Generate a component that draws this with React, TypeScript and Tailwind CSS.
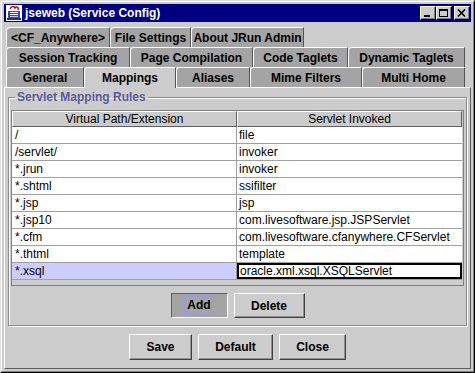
import React from 'react';

const rows: [string, string][] = [
  ['/', 'file'],
  ['/servlet/', 'invoker'],
  ['*.jrun', 'invoker'],
  ['*.shtml', 'ssifilter'],
  ['*.jsp', 'jsp'],
  ['*.jsp10', 'com.livesoftware.jsp.JSPServlet'],
  ['*.cfm', 'com.livesoftware.cfanywhere.CFServlet'],
  ['*.thtml', 'template'],
  ['*.xsql', 'oracle.xml.xsql.XSQLServlet'],
];

// tab rows, back to front
const tabRows: { label: string; w: string }[][] = [
  [
    { label: '<CF_Anywhere>', w: 'w-[104px]' },
    { label: 'File Settings', w: 'w-[81px]' },
    { label: 'About JRun Admin', w: 'w-[113px]' },
  ],
  [
    { label: 'Session Tracking', w: 'w-[124px]' },
    { label: 'Page Compilation', w: 'w-[123px]' },
    { label: 'Code Taglets', w: 'w-[95px]' },
    { label: 'Dynamic Taglets', w: 'w-[117px]' },
  ],
  [
    { label: 'General', w: 'w-[78px]' },
    { label: 'Mappings', w: 'w-[92px]' },
    { label: 'Aliases', w: 'w-[74px]' },
    { label: 'Mime Filters', w: 'w-[112px]' },
    { label: 'Multi Home', w: 'w-[103px]' },
  ],
];

function AppIcon() {
  return (
    <svg width="16" height="16" viewBox="0 0 16 16" className="shrink-0">
      <rect x="0" y="0" width="16" height="16" fill="#ffffff" />
      <path d="M4 4 C5 1 8 1 9 3 C10 1 13 2 12 5" stroke="#d00000" strokeWidth="1.5" fill="none" />
      <rect x="2" y="6" width="12" height="7" fill="#3050a0" />
      <rect x="4" y="7" width="8" height="1" fill="#ffffff" />
      <rect x="4" y="9" width="8" height="1" fill="#ffffff" />
      <rect x="4" y="11" width="8" height="1" fill="#c0c0ff" />
      <rect x="1" y="13" width="14" height="2" fill="#203070" />
    </svg>
  );
}

function CaptionButton({ kind }: { kind: 'min' | 'max' | 'close' }) {
  return (
    <div className="w-[16px] h-[14px] bg-[#cccccc] border border-t-white border-l-white border-b-black border-r-black shadow-[inset_-1px_-1px_0_#808080] flex items-center justify-center">
      <svg width="10" height="9" viewBox="0 0 10 9">
        {kind === 'min' && <rect x="1" y="6" width="6" height="2" fill="#000" />}
        {kind === 'max' && (
          <>
            <rect x="0.5" y="0.5" width="8" height="7" fill="none" stroke="#000" />
            <rect x="0" y="0" width="9" height="2" fill="#000" />
          </>
        )}
        {kind === 'close' && (
          <path d="M1 0.5 L8 7.5 M8 0.5 L1 7.5" stroke="#000" strokeWidth="1.6" />
        )}
      </svg>
    </div>
  );
}

function Tab({ label, w, active }: { label: string; w: string; active: boolean }) {
  return (
    <div
      className={`${w} ${
        active ? 'bg-[#cccccc] h-[21px] -mb-px relative z-10' : 'bg-[#a4a4a4] h-[20px]'
      } flex items-center justify-center rounded-tl-[4px] border-t border-l border-white border-r border-r-[#555555] text-[12px] font-bold text-black whitespace-nowrap`}
    >
      {label}
    </div>
  );
}

function Button({
  children,
  w,
  h,
  pressed = false,
}: {
  children: React.ReactNode;
  w: string;
  h: string;
  pressed?: boolean;
}) {
  return (
    <button
      type="button"
      className={`${w} ${h} flex items-center justify-center text-[12px] font-bold text-black border ${
        pressed
          ? 'bg-[#a4a4a4] border-t-[#606060] border-l-[#606060] border-b-white border-r-white'
          : 'bg-[#cccccc] border-t-white border-l-white border-b-[#404040] border-r-[#404040] shadow-[inset_-1px_-1px_0_#909090]'
      }`}
    >
      {pressed ? (
        <span className="border border-[#9999dd] px-[2px] leading-[17px]">{children}</span>
      ) : (
        children
      )}
    </button>
  );
}

export default function App() {
  return (
    <div className="w-[475px] h-[373px] bg-[#cccccc] border border-t-[#e0e0e0] border-l-[#e0e0e0] border-b-black border-r-black font-['Liberation_Sans',Arial,sans-serif] text-black">
      <div className="h-full flex flex-col border border-t-white border-l-white border-b-[#808080] border-r-[#808080] p-[2px]">
        {/* title bar */}
        <div className="h-[18px] shrink-0 bg-[#000080] flex items-center pl-[2px] pr-[1px]">
          <AppIcon />
          <span className="ml-[3px] text-white font-bold text-[12px] leading-none">
            jseweb (Service Config)
          </span>
          <div className="ml-auto flex items-center">
            <CaptionButton kind="min" />
            <CaptionButton kind="max" />
            <div className="w-[2px]" />
            <CaptionButton kind="close" />
          </div>
        </div>

        {/* tabs */}
        <div className="mt-[5px] pl-[2px] flex flex-col">
          {tabRows.map((row, i) => (
            <div key={i} className="flex">
              {row.map((t) => (
                <Tab key={t.label} label={t.label} w={t.w} active={t.label === 'Mappings'} />
              ))}
            </div>
          ))}
        </div>

        {/* tab panel */}
        <div className="flex-1 flex flex-col border border-t-white border-l-white border-b-[#606060] border-r-[#606060] pt-[2px] px-[3px]">
          <fieldset className="border border-[#8c8c8c] shadow-[1px_1px_0_#ffffff,inset_1px_1px_0_#ffffff] px-[2px] pt-[6px] pb-[7px]">
            <legend className="ml-[4px] px-[2px] text-[12px] font-bold text-[#5a5aa0] leading-[14px]">
              Servlet Mapping Rules
            </legend>

            <div className="h-[176px] border border-[#808080] bg-[#cccccc]">
              <div className="grid grid-cols-2 pr-[1px]">
                <div className="h-[16px] bg-[#cccccc] border border-t-white border-l-white border-b-[#606060] border-r-[#606060] text-[12px] leading-[14px] text-center">
                  Virtual Path/Extension
                </div>
                <div className="h-[16px] bg-[#cccccc] border border-t-white border-l-white border-b-[#606060] border-r-[#606060] text-[12px] leading-[14px] text-center">
                  Servlet Invoked
                </div>
              </div>
              <div className="pr-[1px]">
                {rows.map(([path, servlet], i) => {
                  const selected = i === rows.length - 1;
                  return (
                    <div key={path} className="grid grid-cols-2 h-[17px] text-[12px] leading-[16px]">
                      <div
                        className={`border-b border-r border-[#a0a0a0] pl-[3px] ${
                          selected ? 'bg-[#ccccff]' : 'bg-white'
                        }`}
                      >
                        {path}
                      </div>
                      {selected ? (
                        <div className="bg-white border-b border-[#a0a0a0]">
                          <div className="h-full border-2 border-black pl-[1px] leading-[12px] whitespace-nowrap overflow-hidden">
                            {servlet}
                          </div>
                        </div>
                      ) : (
                        <div className="bg-white border-b border-[#a0a0a0] pl-[2px] whitespace-nowrap overflow-hidden">
                          {servlet}
                        </div>
                      )}
                    </div>
                  );
                })}
              </div>
            </div>

            <div className="mt-[7px] flex justify-center gap-[6px]">
              <Button w="w-[57px]" h="h-[25px]" pressed>
                Add
              </Button>
              <Button w="w-[71px]" h="h-[25px]">
                Delete
              </Button>
            </div>
          </fieldset>

          <div className="mt-[8px] flex justify-center gap-[6px]">
            <Button w="w-[63px]" h="h-[26px]">
              Save
            </Button>
            <Button w="w-[75px]" h="h-[26px]">
              Default
            </Button>
            <Button w="w-[67px]" h="h-[26px]">
              Close
            </Button>
          </div>
        </div>
      </div>
    </div>
  );
}
